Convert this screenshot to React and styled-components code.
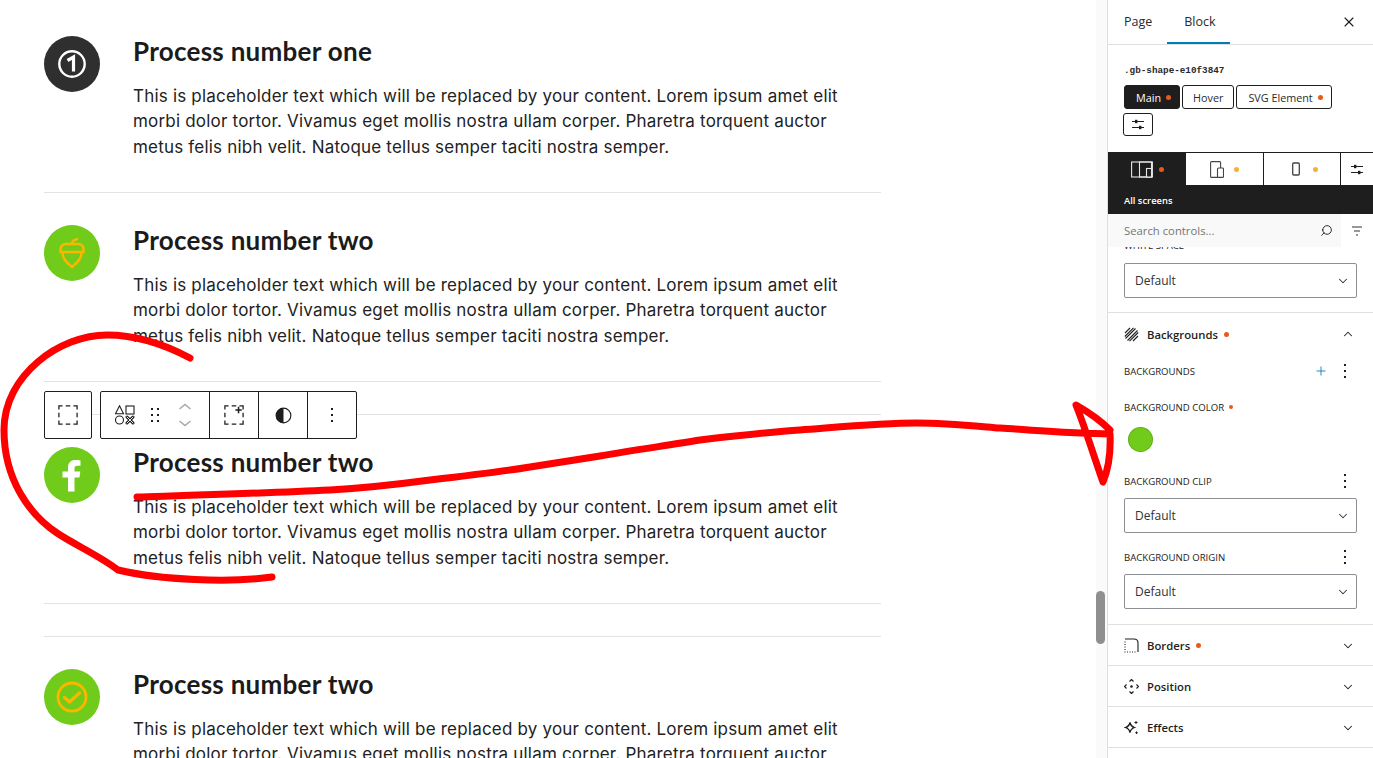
import styled, { createGlobalStyle } from 'styled-components';
import { ChevronDown, ChevronUp, Plus, Search, X } from 'lucide-react';

const GlobalStyle = createGlobalStyle`
  html, body {
    margin: 0;
    height: 100%;
    overflow: hidden;
    background: #fff;
  }
`;

const Page = styled.div`
  position: relative;
  display: flex;
  width: 1373px;
  height: 758px;
  overflow: hidden;
`;

const Canvas = styled.main`
  flex: 1;
  display: flex;
  height: 100%;
  overflow: hidden;
`;

const Content = styled.div`
  width: 837px;
  padding: 36px 0 0 44px;
  flex-shrink: 0;
`;

const Step = styled.article`
  display: grid;
  grid-template-columns: 56px 1fr;
  column-gap: 33px;
  height: 157px;
  box-sizing: border-box;
  border-bottom: ${(p) => (p.$last ? 'none' : '1px solid #e3e3e3')};
  margin-bottom: 32px;
`;

const Rule = styled.hr`
  border: 0;
  border-top: 1px solid #e3e3e3;
  margin: 0 0 32px;
`;

const Badge = styled.div`
  width: 56px;
  height: 56px;
  border-radius: 50%;
  background: ${(p) => p.$bg};
  color: ${(p) => p.$fg};
  display: flex;
  align-items: center;
  justify-content: center;
`;

const StepTitle = styled.h2`
  margin: 0;
  font: 700 26px/30px Lato, sans-serif;
  letter-spacing: 0.27px;
  color: #1b1b1b;
`;

const StepText = styled.p`
  margin: 17.5px 0 0;
  font: 400 17px/25.5px Inter, sans-serif;
  letter-spacing: 0.2px;
  color: #222;
  white-space: nowrap;
`;

const Gutter = styled.div`
  width: 11px;
  margin-left: auto;
  background: #fafafa;
  display: flex;
  flex-direction: column;
  padding-top: 591px;
  box-sizing: border-box;
  align-items: flex-start;
`;

const Thumb = styled.div`
  width: 9px;
  height: 53px;
  border-radius: 5px;
  background: #8f8f8f;
`;

const Sidebar = styled.aside`
  width: 265px;
  flex-shrink: 0;
  height: 100%;
  border-left: 1px solid #dedede;
  display: flex;
  flex-direction: column;
  font-family: 'Open Sans', sans-serif;
  color: #1e1e1e;
  background: #fff;
  overflow: hidden;
`;

const Tabs = styled.div`
  display: flex;
  align-items: center;
  height: 45px;
  box-sizing: border-box;
  flex-shrink: 0;
  padding-left: 16px;
  border-bottom: 1px solid #e0e0e0;
`;

const Tab = styled.div`
  font-size: 12.5px;
  line-height: 44px;
  height: 44px;
  padding-right: ${(p) => (p.$active ? '14px' : '15px')};
  padding-left: ${(p) => (p.$active ? '17px' : '0')};
  color: #2a2a2a;
  box-shadow: ${(p) => (p.$active ? 'inset 0 -2px 0 #007cba' : 'none')};
`;

const CloseButton = styled.div`
  margin-left: auto;
  margin-right: 16px;
  display: flex;
`;

const ClassBlock = styled.div`
  padding: 20px 16px 0;
  height: 107px;
  box-sizing: border-box;
  flex-shrink: 0;
`;

const ClassName = styled.div`
  font: 700 9.3px/12px 'Liberation Mono', monospace;
  color: #2a2a2a;
`;

const Selectors = styled.div`
  display: flex;
  flex-wrap: wrap;
  gap: 4px 2px;
  margin-top: 8px;
`;

const Selector = styled.div`
  display: flex;
  align-items: center;
  gap: 5px;
  height: 24px;
  box-sizing: border-box;
  padding: ${(p) => (p.$dot ? '0 8px 0 11px' : '0 10px')};
  border: 1px solid #1e1e1e;
  border-radius: 3px;
  font-size: 10.8px;
  background: ${(p) => (p.$active ? '#1e1e1e' : '#fff')};
  color: ${(p) => (p.$active ? '#fff' : '#2a2a2a')};
`;

const Dot = styled.span`
  display: inline-block;
  width: ${(p) => p.$size || 5}px;
  height: ${(p) => p.$size || 5}px;
  border-radius: 50%;
  background: ${(p) => p.$color || '#e8591c'};
  flex-shrink: 0;
`;

const IconBox = styled.div`
  width: 30px;
  height: 23px;
  box-sizing: border-box;
  margin-left: -1px;
  border: 1px solid #1e1e1e;
  border-radius: 3px;
  display: flex;
  align-items: center;
  justify-content: center;
`;

const Devices = styled.div`
  display: grid;
  grid-template-columns: 78px 78px 77px 1fr;
  height: 33px;
  flex-shrink: 0;
  border-top: 1px solid #1e1e1e;
  box-sizing: border-box;
`;

const Device = styled.div`
  display: flex;
  align-items: center;
  justify-content: center;
  gap: ${(p) => p.$gap || 6}px;
  padding-left: ${(p) => p.$shift || 0}px;
  background: ${(p) => (p.$active ? '#1e1e1e' : '#fff')};
  color: ${(p) => (p.$active ? '#e6e6e6' : '#444')};
  border-right: ${(p) => (p.$active || p.$end ? 'none' : '1px solid #1e1e1e')};
`;

const ScreenLabel = styled.div`
  height: 29px;
  background: #1e1e1e;
  color: #fff;
  flex-shrink: 0;
  font-size: 9.4px;
  font-weight: 600;
  line-height: 31px;
  padding-left: 16px;
`;

const SearchRow = styled.div`
  display: flex;
  height: 33px;
  flex-shrink: 0;
  align-items: center;
  position: relative;
  z-index: 1;
  background: #fff;
`;

const SearchField = styled.div`
  flex: 1;
  height: 100%;
  display: flex;
  align-items: center;
  justify-content: space-between;
  padding: 0 8px 0 16px;
  background: #f9f9f9;
  font-size: 11.3px;
  color: #757575;
`;

const SearchGlyph = styled(Search)`
  transform: scaleX(-1);
`;

const FilterButton = styled.div`
  width: 32px;
  display: flex;
  justify-content: center;
`;

const Panels = styled.div`
  flex: 1;
  overflow: hidden;
`;

const PanelsInner = styled.div`
  margin-top: -9px;
`;

const Section = styled.section`
  padding: 0 16px;
  border-bottom: 1px solid #e0e0e0;
  padding-bottom: ${(p) => p.$pad || 0}px;
`;

const FieldHead = styled.div`
  display: flex;
  align-items: center;
  height: 14px;
  margin-top: ${(p) => p.$top || 0}px;
  font-size: 9.6px;
  font-weight: 500;
  color: #222;
  gap: 5px;
  text-transform: uppercase;
`;

const FieldActions = styled.div`
  margin-left: auto;
  display: flex;
  align-items: center;
  gap: 15px;
  margin-right: 10px;
`;

const SelectBox = styled.div`
  height: 35px;
  box-sizing: border-box;
  margin-top: ${(p) => p.$top || 10}px;
  border: 1px solid #8c8f94;
  border-radius: 2px;
  display: flex;
  align-items: center;
  justify-content: space-between;
  padding: 0 6px 0 10px;
  font-size: 12px;
  color: #2c3338;
`;

const PanelHead = styled.div`
  display: flex;
  align-items: center;
  height: ${(p) => p.$h || 40}px;
  gap: 8px;
  font-size: 11.3px;
  font-weight: 600;
  color: #1e1e1e;
`;

const PanelTitle = styled.span`
  margin-right: -2px;
`;

const PanelChevron = styled.div`
  margin-left: auto;
  margin-right: 2px;
  margin-top: ${(p) => (p.$down ? '2px' : '0')};
  display: flex;
`;

const Swatch = styled.div`
  width: 25px;
  height: 25px;
  border-radius: 50%;
  margin: 13px 0 0 4px;
  background: #71cb1a;
  box-shadow: inset 0 0 0 1px rgba(0, 0, 0, 0.15);
`;

const Toolbar = styled.div`
  position: absolute;
  left: 44px;
  top: 391px;
  display: flex;
  gap: 8px;
`;

const ToolGroup = styled.div`
  display: flex;
  height: 48px;
  box-sizing: border-box;
  border: 1px solid #1e1e1e;
  border-radius: 2px;
  background: #fff;
`;

const ToolCell = styled.div`
  width: ${(p) => p.$w || 48}px;
  display: flex;
  align-items: center;
  justify-content: center;
  color: #1e1e1e;
  border-left: ${(p) => (p.$sep ? '1px solid #1e1e1e' : 'none')};
`;

const BlockTools = styled.div`
  width: 108px;
  box-sizing: border-box;
  padding-left: 14px;
  display: flex;
  align-items: center;
  gap: 16px;
`;

const Scribble = styled.svg`
  position: absolute;
  left: 0;
  top: 0;
  pointer-events: none;
`;

const SelectChevron = () => <ChevronDown size={14} strokeWidth={1.8} color="#2c3338" />;
const PanelDown = () => <PanelChevron $down><ChevronDown size={14} strokeWidth={1.8} /></PanelChevron>;

const Kebab = () => (
  <svg width="4" height="16" viewBox="0 0 4 16" fill="#1e1e1e">
    <rect x="1" y="1" width="2" height="2" />
    <rect x="1" y="7" width="2" height="2" />
    <rect x="1" y="13" width="2" height="2" />
  </svg>
);

const SlidersIcon = () => (
  <svg width="12" height="11" viewBox="0 0 12 11" fill="#1e1e1e">
    <rect x="0" y="2" width="12" height="1" />
    <rect x="0" y="8" width="12" height="1" />
    <rect x="3" y="0.800" width="2.400" height="3.400" />
    <rect x="7" y="6.800" width="2.400" height="3.400" />
  </svg>
);

const badges = {
  one: (
    <svg width="28" height="28" viewBox="0 0 28 28" fill="none" stroke="#fff">
      <circle cx="14" cy="14" r="12.700" strokeWidth="2.400" />
      <path d="M9.500 10.500 15.500 7V21.500" strokeWidth="3.200" strokeLinejoin="miter" />
    </svg>
  ),
  acorn: (
    <svg width="28" height="32" viewBox="0 0 28 32" fill="none" stroke="currentColor" strokeWidth="2.600" strokeLinecap="round" strokeLinejoin="round">
      <path d="M14 7c0-2.500 1.500-4 5-5" />
      <path d="M8 7h12c3.500 0 5.500 2.500 5.500 5.500V15h-23v-2.500C2.500 9.500 4.500 7 8 7z" />
      <path d="M4.500 15c0 7 3.500 9.500 9.500 15 6-5.500 9.500-8 9.500-15" />
    </svg>
  ),
  facebook: (
    <svg width="22" height="33" viewBox="0 0 22 32" fill="#fff">
      <path d="M7 32V18H1.500v-6H7V8c0-5 3-7.500 7.500-7.500 2 0 3.500.2 5 .4v5.300h-3c-2.500 0-3 1.300-3 3V12h5.800l-.8 6h-5v14H7z" />
    </svg>
  ),
  check: (
    <svg width="32" height="32" viewBox="0 0 32 32" fill="none" stroke="currentColor" strokeWidth="2.800" strokeLinecap="round" strokeLinejoin="round">
      <circle cx="16" cy="16" r="14" />
      <path d="M8.500 16.500l5 4.500 10-9" strokeWidth="3.400" />
    </svg>
  ),
};

const DashedSquare = ({ plus }) => (
  <svg width="20" height="20" viewBox="0 0 22 22" fill="none" stroke="#1e1e1e" strokeWidth="1.400">
    <path d="M1 5V1h4M8.500 1h5M17 1h4v4M21 8.500v5M21 17v4h-4M13.500 21h-5M5 21H1v-4M1 13.500v-5" />
    {plus && <path d="M16 2v7M12.500 5.500h7" stroke="#1e1e1e" strokeWidth="1.700" />}
  </svg>
);

const ShapesIcon = () => (
  <svg width="20" height="20" viewBox="0 0 20 20" fill="none" stroke="#1e1e1e" strokeWidth="1.100">
    <path d="M4.500.8l4 8h-8z" />
    <rect x="11" y="1" width="8" height="8" />
    <circle cx="4.500" cy="15" r="4" />
    <path d="M12 12l6 6M18 12l-6 6" strokeWidth="3" strokeLinecap="round" />
    <path d="M12 12l6 6M18 12l-6 6" stroke="#fff" strokeWidth="0.900" strokeLinecap="round" />
  </svg>
);

const DragIcon = () => (
  <svg width="8" height="14" viewBox="0 0 8 14" fill="#1e1e1e">
    <rect x="0" y="0" width="2" height="2" /><rect x="6" y="0" width="2" height="2" />
    <rect x="0" y="6" width="2" height="2" /><rect x="6" y="6" width="2" height="2" />
    <rect x="0" y="12" width="2" height="2" /><rect x="6" y="12" width="2" height="2" />
  </svg>
);

const MoverIcon = () => (
  <svg width="20" height="24" viewBox="-3 0 20 24" fill="none" stroke="#a8a8a8" strokeWidth="1.500">
    <path d="M1.500 6 7 1.500 12.500 6M1.500 18 7 22.500 12.500 18" />
  </svg>
);

const ContrastIcon = () => (
  <svg width="17" height="17" viewBox="0 0 18 18">
    <circle cx="9" cy="9" r="7.800" fill="#fff" stroke="#1e1e1e" strokeWidth="1.200" />
    <path d="M9 1a8 8 0 0 0 0 16z" fill="#1e1e1e" />
  </svg>
);

const DesktopIcon = () => (
  <svg width="22" height="17" viewBox="0 0 22 17" fill="none" stroke="currentColor" strokeWidth="1.100">
    <rect x="0.600" y="1" width="21" height="15" />
    <rect x="8.500" y="1" width="12" height="15" />
    <rect x="15.500" y="7.500" width="5" height="8.500" fill="#1e1e1e" />
  </svg>
);

const TabletIcon = () => (
  <svg width="14" height="17" viewBox="0 0 14 17" fill="none" stroke="currentColor" strokeWidth="1.100">
    <rect x="0.600" y="0.600" width="10" height="15.800" rx="1" />
    <rect x="7.500" y="7" width="6" height="9.400" rx="1" fill="#fff" />
  </svg>
);

const PhoneIcon = () => (
  <svg width="8" height="14" viewBox="0 0 8 14" fill="none" stroke="currentColor" strokeWidth="1.300">
    <rect x="0.700" y="1" width="6.600" height="12" rx="1" />
  </svg>
);

const FilterIcon = () => (
  <svg width="12" height="10" viewBox="0 0 12 10" fill="none" stroke="#333" strokeWidth="1.100">
    <path d="M1 1h10M3 5h6M5 9h2" />
  </svg>
);

const StripesIcon = () => (
  <svg width="15" height="15" viewBox="0 0 15 15" fill="none" stroke="#1e1e1e" strokeWidth="1.100">
    <path d="M1 6 6 1M.8 9.500 9.500.8M1.500 11.500l10-10M3.500 13.500l10-10M5.500 14.200l8.700-8.700M9 14l5-5" />
  </svg>
);

const BordersIcon = () => (
  <svg width="15" height="15" viewBox="0 0 15 15" fill="none" stroke="#1e1e1e" strokeWidth="1.100">
    <path d="M1 1h9c2.500 0 4 1.500 4 4v9" />
    <path d="M1 3.500V14h11" strokeDasharray="1 1.500" />
  </svg>
);

const PositionIcon = () => (
  <svg width="15" height="15" viewBox="0 0 15 15" fill="none" stroke="#1e1e1e" strokeWidth="1.200">
    <path d="M5.500 2.500l2-2 2 2M5.500 12.500l2 2 2-2M2.500 5.500l-2 2 2 2M12.500 5.500l2 2-2 2" />
    <circle cx="7.500" cy="7.500" r="1.300" fill="#1e1e1e" stroke="none" />
  </svg>
);

const EffectsIcon = () => (
  <svg width="15" height="15" viewBox="0 0 15 15" fill="none" stroke="#1e1e1e" strokeWidth="1.300">
    <path d="M6 2.500c.6 3 1.500 4 4.500 5-3 1-3.900 2-4.500 5-.6-3-1.500-4-4.500-5 3-1 3.900-2 4.500-5z" />
    <path d="M12 1v3M10.500 2.500h3M12.500 11.500v2.500M11.300 12.700h2.500" strokeWidth="1" />
  </svg>
);

const copy = [
  'This is placeholder text which will be replaced by your content. Lorem ipsum amet elit',
  'morbi dolor tortor. Vivamus eget mollis nostra ullam corper. Pharetra torquent auctor',
  'metus felis nibh velit. Natoque tellus semper taciti nostra semper.',
];

const steps = [
  { title: 'Process number one', icon: 'one', bg: '#2f2f2f', fg: '#fff' },
  { title: 'Process number two', icon: 'acorn', bg: '#71cb1a', fg: '#fdb600' },
  { title: 'Process number two', icon: 'facebook', bg: '#71cb1a', fg: '#fff', rule: true },
  { title: 'Process number two', icon: 'check', bg: '#71cb1a', fg: '#fdb600', rule: true, last: true },
];

const App = () => (
  <Page>
    <GlobalStyle />
    <Canvas>
      <Content>
        {steps.map((step, i) => (
          <div key={i}>
            {step.rule && <Rule />}
            <Step $last={step.last}>
              <Badge $bg={step.bg} $fg={step.fg}>{badges[step.icon]}</Badge>
              <div>
                <StepTitle>{step.title}</StepTitle>
                <StepText>{copy[0]}<br />{copy[1]}<br />{copy[2]}</StepText>
              </div>
            </Step>
          </div>
        ))}
      </Content>
      <Gutter><Thumb /></Gutter>
    </Canvas>

    <Sidebar>
      <Tabs>
        <Tab>Page</Tab>
        <Tab $active>Block</Tab>
        <CloseButton><X size={16} strokeWidth={1.7} /></CloseButton>
      </Tabs>
      <ClassBlock>
        <ClassName>.gb-shape-e10f3847</ClassName>
        <Selectors>
          <Selector $active $dot>Main <Dot /></Selector>
          <Selector>Hover</Selector>
          <Selector $dot>SVG Element <Dot /></Selector>
          <IconBox><SlidersIcon /></IconBox>
        </Selectors>
      </ClassBlock>
      <Devices>
        <Device $active><DesktopIcon /><Dot /></Device>
        <Device $gap={10}><TabletIcon /><Dot $color="#f5b335" /></Device>
        <Device $gap={13} $shift={5}><PhoneIcon /><Dot $color="#f5b335" /></Device>
        <Device $end><SlidersIcon /></Device>
      </Devices>
      <ScreenLabel>All screens</ScreenLabel>
      <SearchRow>
        <SearchField>Search controls...<SearchGlyph size={13} strokeWidth={1.7} color="#1e1e1e" /></SearchField>
        <FilterButton><FilterIcon /></FilterButton>
      </SearchRow>
      <Panels>
        <PanelsInner>
          <Section $pad={14}>
            <FieldHead>White space</FieldHead>
            <SelectBox $top={11}>Default<SelectChevron /></SelectBox>
          </Section>
          <Section $pad={15}>
            <PanelHead $h={42}>
              <StripesIcon />
              <PanelTitle>Backgrounds</PanelTitle>
              <Dot />
              <PanelChevron><ChevronUp size={14} strokeWidth={1.8} /></PanelChevron>
            </PanelHead>
            <FieldHead $top={9}>
              Backgrounds
              <FieldActions><Plus size={14} strokeWidth={1.5} color="#007cba" /><Kebab /></FieldActions>
            </FieldHead>
            <FieldHead $top={22}>Background color <Dot $size={4} /></FieldHead>
            <Swatch />
            <FieldHead $top={22}>
              Background clip
              <FieldActions><Kebab /></FieldActions>
            </FieldHead>
            <SelectBox>Default<SelectChevron /></SelectBox>
            <FieldHead $top={17}>
              Background origin
              <FieldActions><Kebab /></FieldActions>
            </FieldHead>
            <SelectBox>Default<SelectChevron /></SelectBox>
          </Section>
          <Section>
            <PanelHead><BordersIcon /><PanelTitle>Borders</PanelTitle><Dot /><PanelDown /></PanelHead>
          </Section>
          <Section>
            <PanelHead><PositionIcon /><PanelTitle>Position</PanelTitle><PanelDown /></PanelHead>
          </Section>
          <Section>
            <PanelHead><EffectsIcon /><PanelTitle>Effects</PanelTitle><PanelDown /></PanelHead>
          </Section>
        </PanelsInner>
      </Panels>
    </Sidebar>

    <Toolbar>
      <ToolGroup><ToolCell $w={46}><DashedSquare /></ToolCell></ToolGroup>
      <ToolGroup>
        <BlockTools><ShapesIcon /><DragIcon /><MoverIcon /></BlockTools>
        <ToolCell $sep><DashedSquare plus /></ToolCell>
        <ToolCell $sep><ContrastIcon /></ToolCell>
        <ToolCell $sep><Kebab /></ToolCell>
      </ToolGroup>
    </Toolbar>

    <Scribble width="1373" height="758" viewBox="0 0 1373 758" fill="none" stroke="#fe0000" strokeWidth="7" strokeLinecap="round" strokeLinejoin="round">
      <path d="M190 358C160 342 130 335 107 335C60 335 4 375 4 430C4 480 30 515 57 533C75 545 100 556 118 570C160 580 230 583 272 577" />
      <path d="M137 497C200 495 270 493 330 490C365 488 400 484 430 480C465 476 500 472 530 467C555 463 580 459 600 456C635 450 670 445 700 440C735 436 770 432 800 430C840 427 880 423 917 423C945 423 975 426 1000 428C1030 430 1055 432 1080 433L1110 434C1111 455 1108 470 1103 482C1095 460 1086 430 1076 405C1090 413 1102 422 1110 430" />
    </Scribble>
  </Page>
);

export default App;
